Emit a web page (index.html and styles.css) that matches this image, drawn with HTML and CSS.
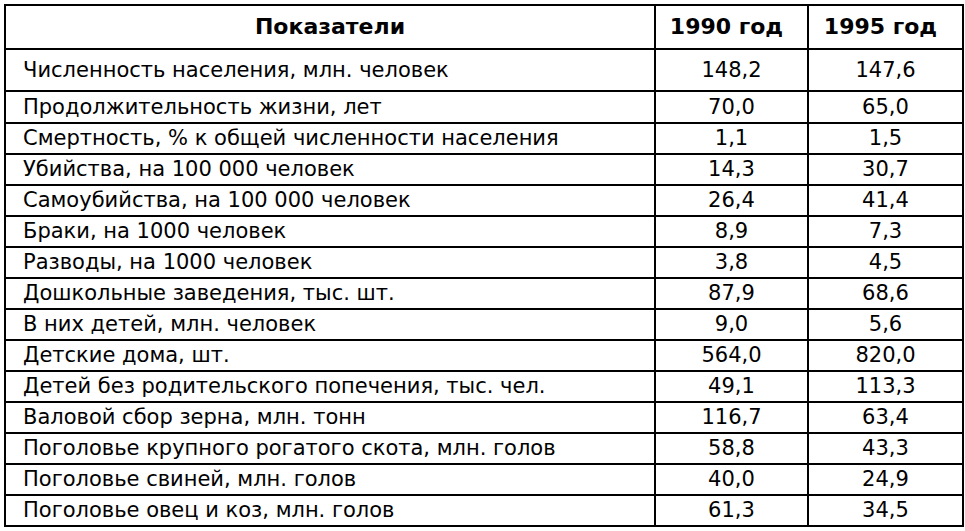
FILE: index.html
```html
<!DOCTYPE html>
<html lang="ru">
<head>
<meta charset="utf-8">
<title>Показатели</title>
<link rel="stylesheet" href="styles.css">
</head>
<body>
<table class="data">
<colgroup>
<col class="c-name">
<col class="c-val">
<col class="c-val2">
</colgroup>
<thead>
<tr class="head"><th>Показатели</th><th class="year">1990 год</th><th class="year">1995 год</th></tr>
</thead>
<tbody>
<tr class="first"><td>Численность населения, млн. человек</td><td>148,2</td><td>147,6</td></tr>
<tr class="second"><td>Продолжительность жизни, лет</td><td>70,0</td><td>65,0</td></tr>
<tr><td>Смертность, % к общей численности населения</td><td>1,1</td><td>1,5</td></tr>
<tr><td>Убийства, на 100 000 человек</td><td>14,3</td><td>30,7</td></tr>
<tr><td>Самоубийства, на 100 000 человек</td><td>26,4</td><td>41,4</td></tr>
<tr><td>Браки, на 1000 человек</td><td>8,9</td><td>7,3</td></tr>
<tr><td>Разводы, на 1000 человек</td><td>3,8</td><td>4,5</td></tr>
<tr><td>Дошкольные заведения, тыс. шт.</td><td>87,9</td><td>68,6</td></tr>
<tr><td>В них детей, млн. человек</td><td>9,0</td><td>5,6</td></tr>
<tr><td>Детские дома, шт.</td><td>564,0</td><td>820,0</td></tr>
<tr><td>Детей без родительского попечения, тыс. чел.</td><td>49,1</td><td>113,3</td></tr>
<tr><td>Валовой сбор зерна, млн. тонн</td><td>116,7</td><td>63,4</td></tr>
<tr><td>Поголовье крупного рогатого скота, млн. голов</td><td>58,8</td><td>43,3</td></tr>
<tr><td>Поголовье свиней, млн. голов</td><td>40,0</td><td>24,9</td></tr>
<tr><td>Поголовье овец и коз, млн. голов</td><td>61,3</td><td>34,5</td></tr>
</tbody>
</table>
</body>
</html>
```
FILE: styles.css
```css
html, body {
  margin: 0;
  padding: 0;
  background: #fff;
}
body {
  padding: 4px 0 0 4px;
  font-family: "DejaVu Sans", sans-serif;
  color: #000;
}
.data {
  border-collapse: collapse;
  width: 958px;
  table-layout: fixed;
  font-size: 21px;
}
.c-name { width: 650px; }
.c-val { width: 153px; }
.c-val2 { width: 155px; }
.data th, .data td {
  border: 2px solid #000;
  padding: 0;
  line-height: 1;
  vertical-align: middle;
}
.data th {
  height: 42px;
  font-size: 22px;
  font-weight: bold;
  text-align: center;
}
.data th.year {
  padding-right: 10px;
}
.data td {
  height: 29px;
  text-align: center;
}
.data td:first-child {
  text-align: left;
  padding-left: 17px;
}
.data tr.first td { height: 40px; }
.data tr.second td { height: 30px; }
```
